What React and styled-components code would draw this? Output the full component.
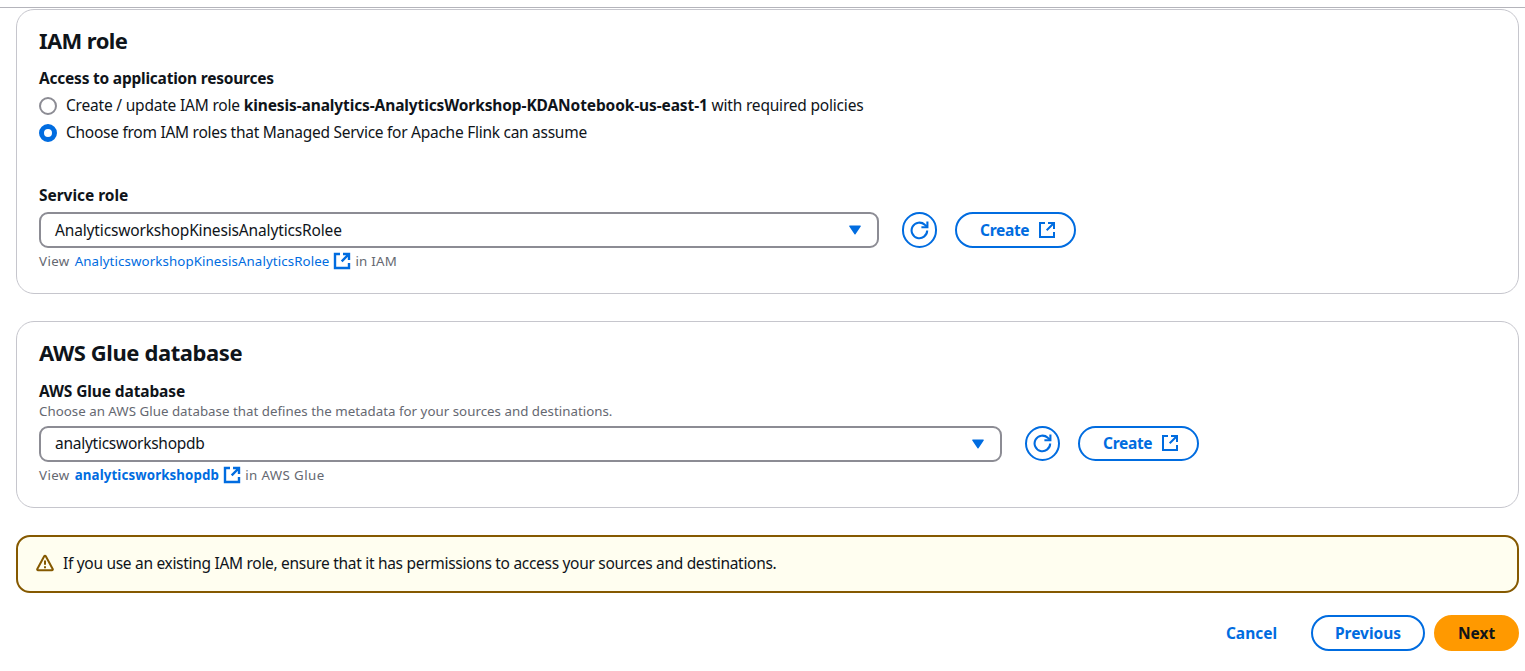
import React from "react";
import styled, { createGlobalStyle, css } from "styled-components";

const GlobalStyle = createGlobalStyle`
  *, *::before, *::after { box-sizing: border-box; }
  body {
    margin: 0;
    background: #ffffff;
    color: #0f141a;
    font-family: "Noto Sans", "Open Sans", sans-serif;
    font-size: 15.5px;
    line-height: 22px;
  }
`;

const Page = styled.main`
  height: 671px;
  padding-top: 7px;
  overflow: hidden;
`;

const TopRule = styled.div`
  height: 1px;
  margin-bottom: 1px;
  background: #b4b4bb;
`;

const Content = styled.div`
  display: flex;
  flex-direction: column;
  gap: 27px;
  padding: 0 6px 0 16px;
`;

const Card = styled.section`
  display: flex;
  flex-direction: column;
  height: ${(p) => p.$height}px;
  padding: 16px 22px 0;
  border: 1px solid #c6c6cd;
  border-radius: 18px;
`;

const Text = styled.span`
  letter-spacing: ${(p) => p.$track || 0}px;
  white-space: nowrap;
`;

const Strong = styled.b`
  letter-spacing: -0.115px;
`;

const Heading = styled.h2`
  margin: 0;
  font-size: 22px;
  font-weight: 700;
  line-height: 28px;
`;

const Label = styled.div`
  margin-top: ${(p) => p.$top}px;
  font-weight: 700;
  line-height: 22px;
`;

const Hint = styled.div`
  height: 20px;
  color: #656871;
  font-size: 13.3px;
  line-height: 18px;
  white-space: nowrap;
`;

const RadioGroup = styled.div`
  margin-top: 3px;
`;

const RadioRow = styled.label`
  display: flex;
  align-items: center;
  gap: 9px;
  height: 27px;

  ${Text} {
    padding-bottom: 1px;
  }
`;

const Radio = styled.span`
  width: 18px;
  height: 18px;
  border: ${(p) => (p.$checked ? "5px solid #006ce0" : "2px solid #8c8c94")};
  border-radius: 50%;
  background: #fff;
`;

const FieldRow = styled.div`
  display: flex;
  align-items: flex-start;
  margin-top: ${(p) => p.$top}px;
`;

const Select = styled.div`
  display: flex;
  align-items: center;
  justify-content: space-between;
  width: ${(p) => p.$width}px;
  height: 36px;
  padding: 0 16px 1px 14px;
  margin-right: 23px;
  border: 2px solid #8c8c94;
  border-radius: 9px;

  ${Text} {
    padding-bottom: ${(p) => p.$lift || 0}px;
  }
`;

const Button = styled.button`
  display: flex;
  align-items: center;
  justify-content: center;
  gap: 9px;
  width: ${(p) => p.$width}px;
  height: ${(p) => p.$height || 36}px;
  padding: 0 0 1px;
  border: 2px solid #006ce0;
  border-radius: 18px;
  background: #fff;
  color: #006ce0;
  font: inherit;
  font-weight: 700;
  ${(p) => p.$variant === "link" && css`border-color: transparent;`}
  ${(p) => p.$variant === "primary" && css`
    border-color: #ff9900;
    background: #ff9900;
    color: #0f141a;
  `}
`;

const IconButton = styled(Button)`
  margin-right: 18px;
`;

const CreateButton = styled(Button)`
  justify-content: flex-start;
  padding-left: 23px;
`;

const Footnote = styled.div`
  display: flex;
  align-items: center;
  height: 18px;
  margin-top: ${(p) => p.$top}px;
  color: #656871;
  font-size: 13.3px;
  line-height: 18px;

  ${Text} {
    padding-bottom: ${(p) => p.$lift || 0}px;
  }
`;

const Link = styled.a`
  display: flex;
  align-items: center;
  gap: 4px;
  margin: 0 4px 0 5px;
  color: #006ce0;
  font-weight: ${(p) => (p.$bold ? 700 : 400)};
`;

const Alert = styled.div`
  display: flex;
  align-items: center;
  gap: 9px;
  height: 58px;
  padding: 0 18px 2px;
  border: 2px solid #855900;
  border-radius: 14px;
  background: #fffef0;

  ${Text} {
    padding-bottom: 1px;
  }
`;

const Actions = styled.div`
  display: flex;
  justify-content: flex-end;
  gap: 9px;
  margin-top: -5px;
`;

const Svg = styled.svg`
  display: block;
  flex: none;
`;

const External = ({ weight = 2 }) => (
  <Svg width="18" height="18" viewBox="0 0 18 18" fill="none" stroke="currentColor" strokeWidth={weight}>
    <path d="M7 2H2v14h14v-5" />
    <path d="M10 2h6v6M16 2 8.7 9.3" />
  </Svg>
);

const Refresh = () => (
  <Svg width="19" height="20" viewBox="0 0 19 20" fill="none" stroke="currentColor" strokeWidth="2.1">
    <path d="M17.2 10.6a7.8 7.8 0 1 1-2.4-5.8L17 6.6" />
    <path d="M17.4 1.6v5.6h-6" />
  </Svg>
);

const Caret = () => (
  <Svg width="12" height="10" viewBox="0 0 12 10" fill="#006ce0">
    <path d="M.8.5h10.4c.6 0 .9.5.5 1L6.5 9.2c-.3.4-.7.4-1 0L.3 1.5C-.1 1 .2.5.8.5z" />
  </Svg>
);

const Warning = () => (
  <Svg width="18" height="18" viewBox="0 0 18 18" fill="none" stroke="#855900" strokeWidth="2" strokeLinejoin="round">
    <path d="M8.2 2.2 1.3 15c-.3.6 0 1.2.7 1.2h14c.7 0 1-.6.7-1.2L9.8 2.2c-.4-.7-1.2-.7-1.6 0z" />
    <path d="M9 6.5v4.2M9 12.2v2" />
  </Svg>
);

export default function App() {
  return (
    <>
      <GlobalStyle />
      <Page>
        <TopRule />
        <Content>
          <Card $height={285}>
            <Heading><Text $track={-0.6}>IAM role</Text></Heading>
            <Label $top={13}><Text $track={-0.22}>Access to application resources</Text></Label>
            <RadioGroup>
              <RadioRow>
                <Radio />
                <Text $track={-0.2}>Create / update IAM role <Strong>kinesis-analytics-AnalyticsWorkshop-KDANotebook-us-east-1</Strong> with required policies</Text>
              </RadioRow>
              <RadioRow>
                <Radio $checked />
                <Text $track={-0.27}>Choose from IAM roles that Managed Service for Apache Flink can assume</Text>
              </RadioRow>
            </RadioGroup>
            <Label $top={38}><Text $track={-0.04}>Service role</Text></Label>
            <FieldRow $top={6}>
              <Select $width={840}><Text $track={-0.15}>AnalyticsworkshopKinesisAnalyticsRolee</Text><Caret /></Select>
              <IconButton $width={35} aria-label="Refresh"><Refresh /></IconButton>
              <CreateButton $width={121}><Text $track={-0.3}>Create</Text><External /></CreateButton>
            </FieldRow>
            <Footnote $top={4}>
              <Text $track={0.4}>View</Text>
              <Link><Text $track={0.1}>AnalyticsworkshopKinesisAnalyticsRolee</Text><External weight={2.4} /></Link>
              <Text $track={0.25}>in IAM</Text>
            </Footnote>
          </Card>
          <Card $height={187}>
            <Heading><Text $track={-0.41}>AWS Glue database</Text></Heading>
            <Label $top={14}><Text $track={-0.12}>AWS Glue database</Text></Label>
            <Hint><Text $track={0.02}>Choose an AWS Glue database that defines the metadata for your sources and destinations.</Text></Hint>
            <FieldRow $top={4}>
              <Select $width={963} $lift={2}><Text $track={-0.26}>analyticsworkshopdb</Text><Caret /></Select>
              <IconButton $width={35} $height={35} aria-label="Refresh"><Refresh /></IconButton>
              <CreateButton $width={121} $height={35}><Text $track={-0.3}>Create</Text><External /></CreateButton>
            </FieldRow>
            <Footnote $top={4} $lift={1}>
              <Text $track={0.4}>View</Text>
              <Link $bold><Text $track={0.12}>analyticsworkshopdb</Text><External weight={2.4} /></Link>
              <Text $track={0.4}>in AWS Glue</Text>
            </Footnote>
          </Card>
          <Alert>
            <Warning />
            <Text $track={-0.3}>If you use an existing IAM role, ensure that it has permissions to access your sources and destinations.</Text>
          </Alert>
          <Actions>
            <Button $width={101} $variant="link"><Text>Cancel</Text></Button>
            <Button $width={114}><Text>Previous</Text></Button>
            <Button $width={85} $variant="primary"><Text>Next</Text></Button>
          </Actions>
        </Content>
      </Page>
    </>
  );
}
